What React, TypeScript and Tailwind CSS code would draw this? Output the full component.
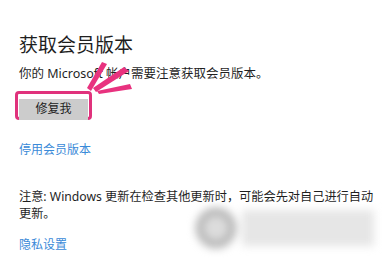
import React from "react"

const font = { fontFamily: '"Noto Sans", "Noto Sans CJK SC", sans-serif' }

function Burst() {
  return (
    <svg
      className="absolute left-[84px] top-[58px]"
      width="52"
      height="36"
      viewBox="0 0 52 36"
    >
      <polygon points="3,30 7,33 23,6 18,4" fill="#e8327f" />
      <polygon points="9,30 12,34 45,13 40,9" fill="#e8327f" />
      <polygon points="13,33 15,36 48,31 46,26" fill="#e8327f" />
    </svg>
  )
}

export default function App() {
  return (
    <div className="relative w-[389px] h-[266px] bg-white overflow-hidden text-[#1f1f1f]" style={font}>
      <div className="absolute left-[196px] top-[206px] w-[178px] h-[44px] blur-[4px] flex items-center gap-[6px]">
        <div className="w-[40px] h-[40px] rounded-full bg-[#dcdcdc] border-[7px] border-[#b0b0b0]" />
        <div className="flex-1 h-[36px] bg-[#e6e6e6]" />
      </div>
      <div className="relative pt-[33px] pl-[19px]">
        <h1 className="text-[19px] leading-[24px] font-normal">获取会员版本</h1>
        <p className="mt-[8px] text-[12.5px] leading-[18px] whitespace-nowrap">
          你的 Microsoft 帐户需要注意获取会员版本。
        </p>
        <div className="mt-[8px] ml-[-4px] w-[77px] h-[29px] rounded-[4px] border-[3px] border-[#e0327c] p-[1px]">
          <button className="w-full h-full bg-[#cccccc] text-[12px] leading-none text-[#222]">
            修复我
          </button>
        </div>
        <a className="block mt-[21px] text-[12px] leading-[18px] text-[#3a8ad8]">停用会员版本</a>
        <p className="mt-[29px] text-[12.2px] leading-[17px] whitespace-nowrap">
          注意: Windows 更新在检查其他更新时，可能会先对自己进行自动
          <br />
          更新。
        </p>
        <a className="block mt-[14px] text-[12px] leading-[18px] text-[#3a8ad8]">隐私设置</a>
      </div>
      <Burst />
    </div>
  )
}
